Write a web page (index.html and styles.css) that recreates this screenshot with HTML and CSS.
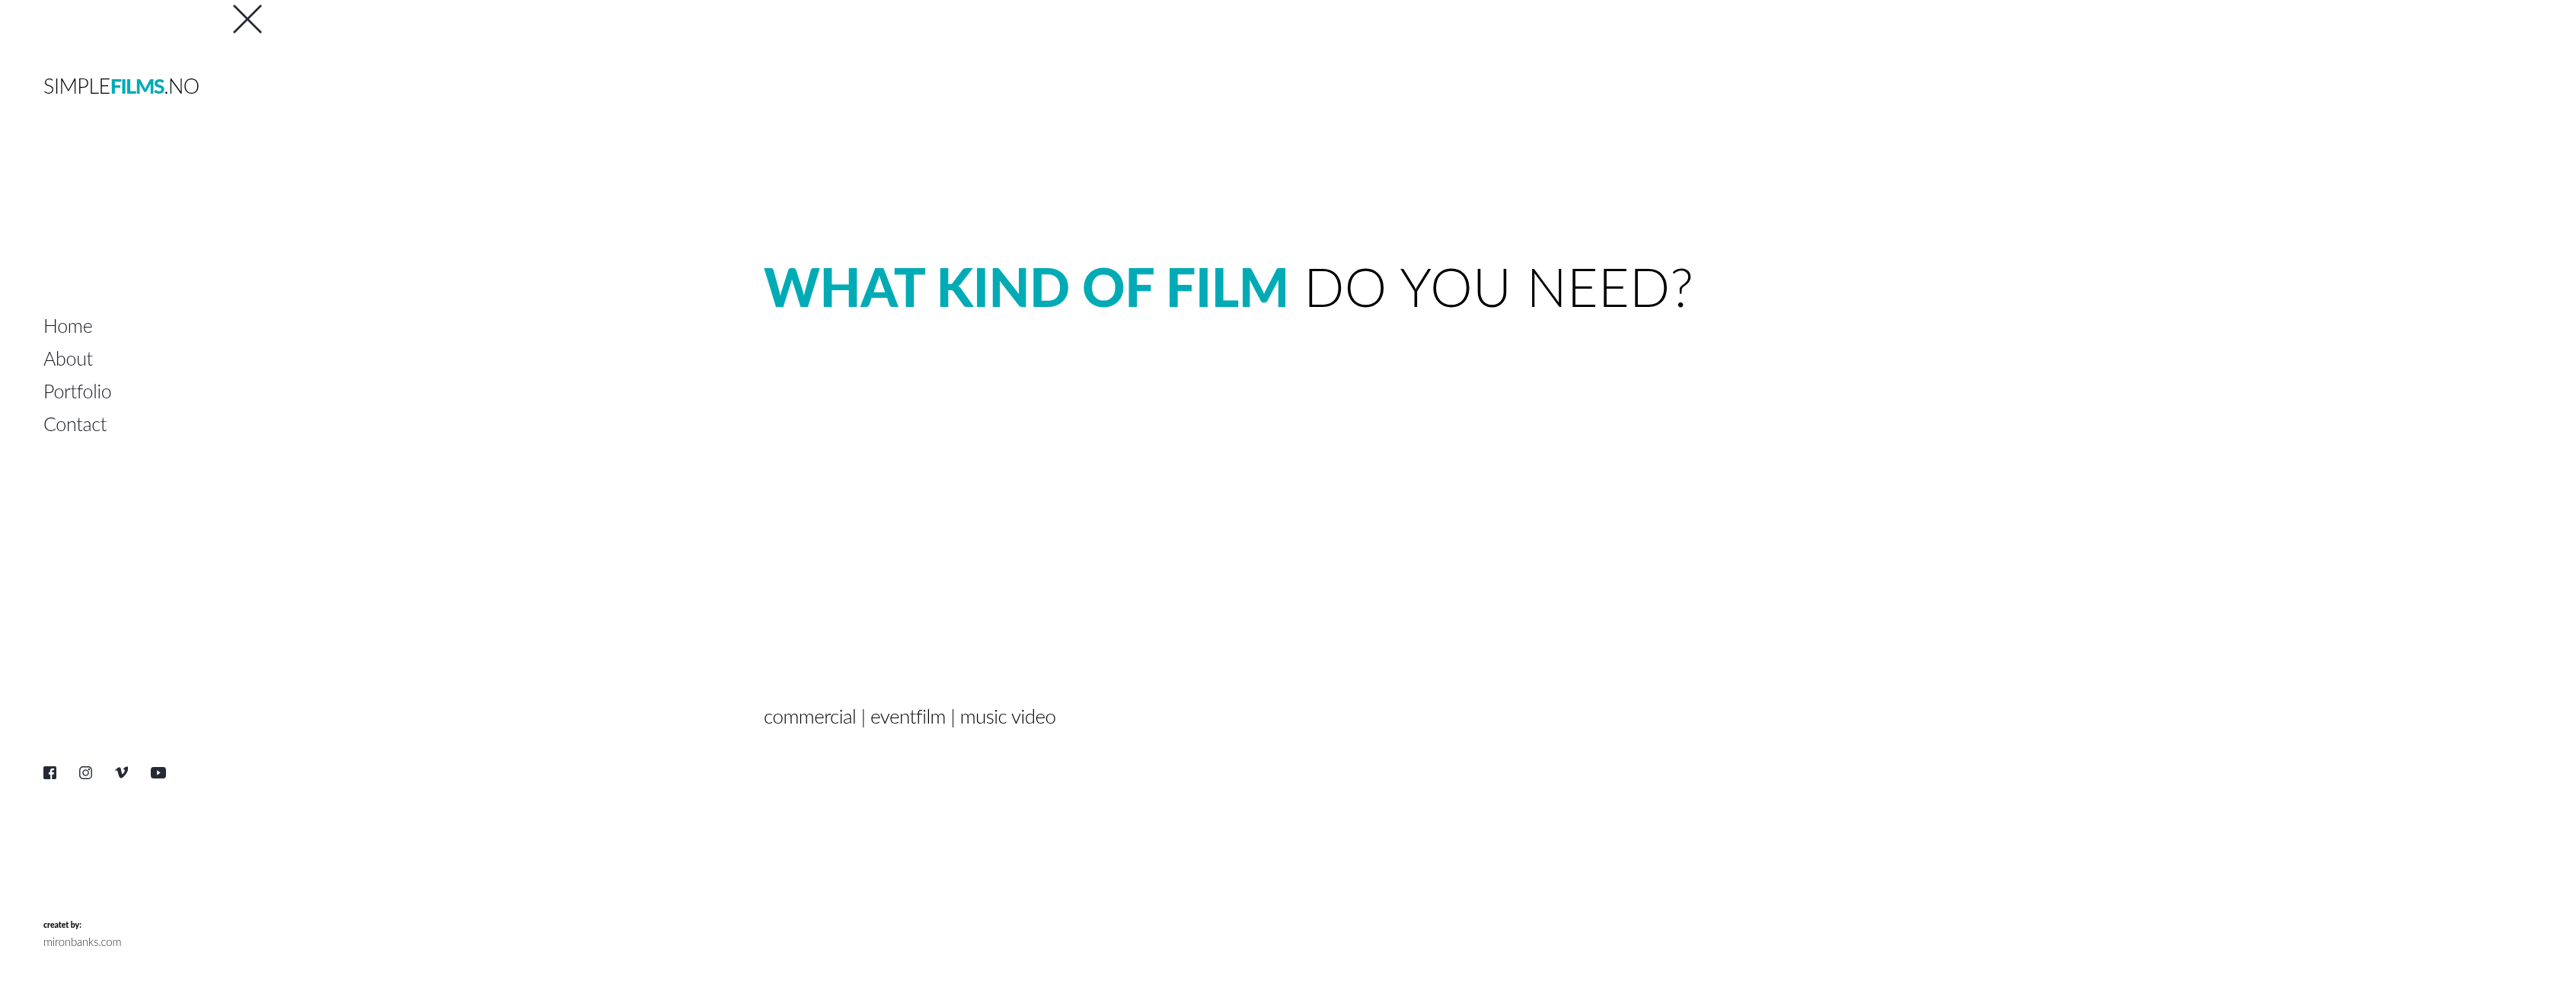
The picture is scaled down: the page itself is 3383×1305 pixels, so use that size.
FILE: index.html
```html
<!DOCTYPE html>
<html lang="en">
<head>
    <meta charset="UTF-8">
    <meta name="viewport" content="width=device-width, initial-scale=1.0">
    <title>Simple Films</title>
    <link rel="stylesheet" href="styles.css">
</head>
<body>
    <div class="page">
        <aside class="sidebar">
            <button class="close" aria-label="Close menu">
                <svg width="38" height="38" viewBox="0 0 38 38"><path d="M1 1 L37 37 M37 1 L1 37" stroke="#262a35" stroke-width="2.800" fill="none"/></svg>
            </button>
            <div class="logo">SIMPLE<b>FILMS</b>.NO</div>
            <nav class="menu">
                <a href="#">Home</a>
                <a href="#">About</a>
                <a href="#">Portfolio</a>
                <a href="#">Contact</a>
            </nav>
            <div class="social">
                <svg width="17" height="17" viewBox="0 0 18 18"><path fill="#262a35" fill-rule="evenodd" d="M2 0h14a2 2 0 0 1 2 2v14a2 2 0 0 1-2 2h-4v-6.600h2.400l.4-2.800H12V7c0-.9.3-1.400 1.400-1.400h1.500V3.100c-.4 0-1.200-.1-2.100-.1-2.200 0-3.600 1.300-3.600 3.700v1.900H7.300v2.800h2.400V18H2a2 2 0 0 1-2-2V2a2 2 0 0 1 2-2z"/></svg>
                <svg width="17" height="17" viewBox="0 0 18 18" fill="none" stroke="#262a35" stroke-width="1.500"><rect x=".8" y=".8" width="16.400" height="16.400" rx="4.500"/><circle cx="9" cy="9" r="3.800"/><circle cx="13.800" cy="4.200" r=".6" fill="#262a35"/></svg>
                <svg width="17" height="17" viewBox="0 0 18 18"><path fill="#262a35" d="M18 4.700c-.1 1.700-1.300 4.100-3.700 7.100C11.900 15 9.800 16.500 8.100 16.500c-1 0-1.900-1-2.600-2.900L4 8.500C3.500 6.600 3 5.600 2.400 5.600c-.1 0-.6.3-1.300.9L.2 5.300C1.100 4.500 2 3.700 2.900 2.900 4.100 1.800 5 1.300 5.600 1.200c1.500-.1 2.400.9 2.700 2.900.4 2.200.6 3.600.8 4.100.4 1.900.9 2.800 1.400 2.800.4 0 1-.7 1.800-1.900.8-1.300 1.200-2.200 1.300-2.900.1-1.100-.3-1.600-1.300-1.600-.5 0-.9.100-1.400.3C12.800 1.900 14.500.5 17 .6c1.900 0 2.700 1.400 1 4.100z"/></svg>
                <svg width="20" height="15" viewBox="0 2 22 14" preserveAspectRatio="none"><path fill="#262a35" fill-rule="evenodd" d="M4 2h14a4 4 0 0 1 4 4v6a4 4 0 0 1-4 4H4a4 4 0 0 1-4-4V6a4 4 0 0 1 4-4zM9 6v6l5-3z"/></svg>
            </div>
            <div class="credit">
                <strong>createt by:</strong>
                <span>mironbanks.com</span>
            </div>
        </aside>
        <main class="content">
            <h1><b>WHAT KIND OF FILM</b> DO YOU NEED?</h1>
            <p class="tags">commercial | eventfilm | music video</p>
        </main>
    </div>
</body>
</html>
```

FILE: styles.css
```css
body {
    margin: 0;
    padding: 0;
    background-color: #fff;
    font-family: "Lato", "Liberation Sans", sans-serif;
    font-weight: 300;
    color: #262a35;
}
.page {
    display: flex;
    height: 1305px;
    overflow: hidden;
    will-change: transform;
}
.sidebar {
    width: 1003px;
    flex-shrink: 0;
    box-sizing: border-box;
    padding-left: 57px;
    display: flex;
    flex-direction: column;
    align-items: flex-start;
}
.close {
    background: none;
    border: none;
    padding: 0;
    margin: 6px 0 0 249px;
    height: 38px;
    line-height: 0;
}
.logo {
    margin-top: 52px;
    font-size: 27px;
    line-height: 34px;
    letter-spacing: -0.55px;
    color: #000;
}
.logo b {
    font-weight: 900;
    letter-spacing: -1.5px;
    color: #00abb6;
}
.menu {
    margin-top: 280px;
    display: flex;
    flex-direction: column;
    gap: 9px;
}
.menu a {
    font-size: 25px;
    line-height: 34px;
    letter-spacing: -0.3px;
    color: #15181f;
    text-decoration: none;
}
.social {
    margin-top: 432px;
    display: flex;
    align-items: center;
    gap: 30px;
    height: 18px;
}
.credit {
    margin-top: 185px;
    display: flex;
    flex-direction: column;
    gap: 7px;
}
.credit strong {
    font-size: 10.500px;
    line-height: 12px;
    font-weight: 900;
    color: #000;
}
.credit span {
    font-size: 15px;
    line-height: 18px;
    letter-spacing: -0.2px;
    color: #333;
}
.content {
    flex: 1;
}
h1 {
    margin: 333px 0 0;
    font-size: 70px;
    line-height: 86px;
    font-weight: 300;
    letter-spacing: 0.4px;
    color: #000;
}
h1 b {
    font-weight: 900;
    letter-spacing: -0.5px;
    color: #00abb6;
}
.tags {
    margin: 505px 0 0;
    font-size: 26px;
    line-height: 32px;
    letter-spacing: -0.55px;
    color: #000;
}
```
